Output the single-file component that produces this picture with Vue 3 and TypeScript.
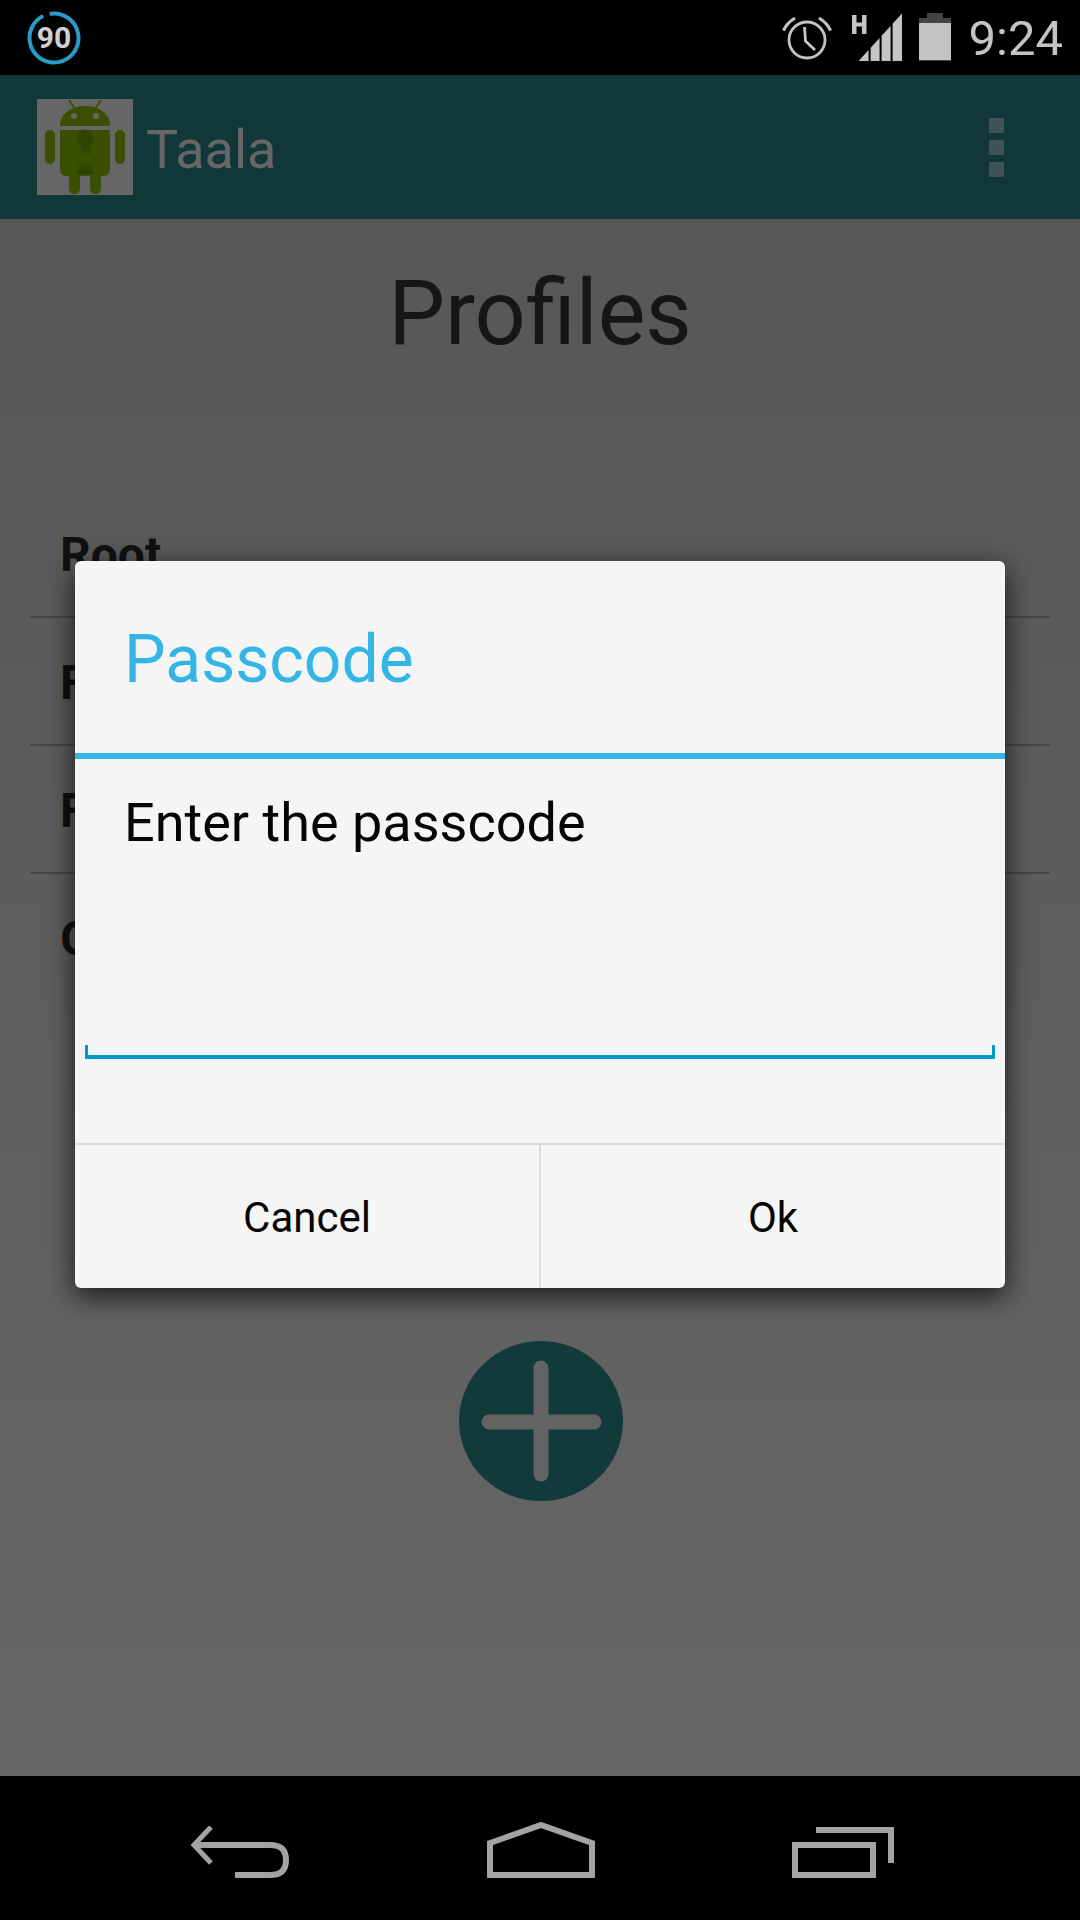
<template>
  <div class="phone">
    <!-- Status bar -->
    <header class="status-bar">
      <svg class="badge" width="54" height="54" viewBox="0 0 54 54">
        <circle cx="27" cy="27" r="24.500" fill="none" stroke="#2a9ccb" stroke-width="4" stroke-dasharray="146 8" transform="rotate(-100 27 27)" />
        <text x="27" y="37" text-anchor="middle" class="badge-text">90</text>
      </svg>
      <div class="status-right">
        <svg class="alarm" width="50" height="50" viewBox="0 0 50 50" fill="none" stroke="#c4c4c4">
          <circle cx="25" cy="27" r="18" stroke-width="2.800" />
          <path d="M22.500 14L23.500 28L33 37" stroke-width="2.800" />
          <path d="M1.500 17.500C4 12 8 8 13 5M48.500 17.500C46 12 42 8 37 5" stroke-width="3.200" />
        </svg>
        <svg class="signal" width="50" height="50" viewBox="0 0 50 50">
          <path d="M0 2H4.500V9.500H10V2H14.500V21H10V13.500H4.500V21H0Z" fill="#c4c4c4" />
          <path d="M7 48V47.500L16.600 37V48ZM18.600 48V34.800L27.600 25V48ZM29.600 48V22.800L38.600 13V48ZM40.600 48V10.800L50 0.500V48Z" fill="#c4c4c4" />
        </svg>
        <svg class="battery" width="32" height="48" viewBox="0 0 32 48">
          <path d="M8 0H24V5H32V48H0V5H8Z" fill="#444" />
          <rect x="0" y="10" width="32" height="37" fill="#c4c4c4" />
        </svg>
        <span class="clock">9:24</span>
      </div>
    </header>

    <!-- Action bar -->
    <div class="app-bar">
      <svg class="app-icon" width="96" height="96" viewBox="0 0 96 96">
        <defs>
          <linearGradient id="keyhole" x1="0" y1="0" x2="0" y2="1">
            <stop offset="0" stop-color="#2a3c00" />
            <stop offset="0.500" stop-color="#3c5400" />
            <stop offset="1" stop-color="#2a3c00" />
          </linearGradient>
        </defs>
        <rect width="96" height="96" fill="#666" />
        <path d="M32 1L38 10M64 1L58 10" stroke="#3a5000" stroke-width="2" />
        <path d="M23 27C23 14 35 7 48 7C61 7 73 14 73 27Z" fill="#3a5000" />
        <circle cx="37" cy="17" r="3" fill="#666" />
        <circle cx="59" cy="17" r="3" fill="#666" />
        <path d="M23 31H73V70Q73 77 66 77H30Q23 77 23 70Z" fill="#3a5000" />
        <rect x="8" y="31" width="10" height="34" rx="5" fill="#3a5000" />
        <rect x="78" y="31" width="10" height="34" rx="5" fill="#3a5000" />
        <rect x="32" y="70" width="11" height="25" rx="5.500" fill="#3a5000" />
        <rect x="53" y="70" width="11" height="25" rx="5.500" fill="#3a5000" />
        <path d="M45 44H52L56 75H40Z" fill="url(#keyhole)" />
        <circle cx="48" cy="39" r="8.500" fill="#304400" />
      </svg>
      <span class="app-title">Taala</span>
      <div class="overflow-menu">
        <i /><i /><i />
      </div>
    </div>

    <!-- Screen behind the dialog -->
    <main class="content">
      <h1 class="page-title">Profiles</h1>
      <ul class="profile-list">
        <li v-for="p in profiles" :key="p">{{ p }}</li>
      </ul>
      <div class="add-btn">
        <svg width="164" height="160" viewBox="0 0 164 160">
          <ellipse cx="82" cy="80" rx="82" ry="80" fill="#123a3b" />
          <path d="M30 81H135M82 27V133" stroke="#636363" stroke-width="15" stroke-linecap="round" />
        </svg>
      </div>
    </main>

    <!-- Navigation bar -->
    <nav class="nav-bar">
      <svg width="100" height="52" viewBox="0 0 100 52" fill="none" stroke="#a3a3a3" stroke-width="6">
        <path d="M21 1L4 19L21 37" stroke-width="5" />
        <path d="M4 19H80C92 19 96 25 96 34C96 43 92 49 80 49H45" />
      </svg>
      <svg width="108" height="56" viewBox="0 0 108 56" fill="none" stroke="#a3a3a3" stroke-width="6">
        <path d="M3 53V21L54 3L105 21V53Z" />
      </svg>
      <svg width="102" height="52" viewBox="0 0 102 52" fill="none" stroke="#a3a3a3" stroke-width="6">
        <path d="M24 4H99V37" />
        <path d="M3 49V19H81V49Z" />
      </svg>
    </nav>

    <!-- Passcode dialog -->
    <section class="dialog">
      <div class="dialog-title">Passcode</div>
      <div class="dialog-body">
        <p class="dialog-msg">Enter the passcode</p>
        <div class="edit-field" />
      </div>
      <div class="dialog-buttons">
        <button>Cancel</button>
        <button>Ok</button>
      </div>
    </section>
  </div>
</template>

<script setup lang="ts">
const profiles: string[] = ['Root', 'Family', 'Friends', 'Guest']
</script>

<style>
html, body { margin: 0; background: #000; }
</style>

<style scoped>
.phone {
  position: relative;
  width: 1080px;
  height: 1920px;
  display: flex;
  flex-direction: column;
  overflow: hidden;
  font-family: Roboto, "Liberation Sans", sans-serif;
  background: #000;
}

/* Status bar */
.status-bar {
  height: 75px;
  flex: none;
  display: flex;
  align-items: center;
  justify-content: space-between;
  padding: 0 17px 0 27px;
  background: #000;
}
.badge { display: block; margin-top: 1px; }
.badge-text { font-size: 30px; font-weight: 700; fill: #d0d0d0; }
.status-right { display: flex; align-items: center; }
.alarm { margin-right: 20px; }
.signal { margin-right: 17px; }
.battery { margin-right: 18px; margin-bottom: 2px; }
.clock { font-size: 49px; color: #c4c4c4; line-height: 75px; padding-top: 1px; }

/* Action bar */
.app-bar {
  height: 144px;
  flex: none;
  display: flex;
  align-items: center;
  box-sizing: border-box;
  padding: 0 76px 0 37px;
  background: #113739;
}
.app-icon { flex: none; }
.app-title { margin: 5px 0 0 13px; font-size: 54px; color: #666; flex: 1; }
.overflow-menu { display: flex; flex-direction: column; gap: 7px; }
.overflow-menu i { display: block; width: 15px; height: 15px; background: #3f5354; }

/* Content */
.content {
  flex: 1;
  min-height: 0;
  background: linear-gradient(#575757, #666);
  display: flex;
  flex-direction: column;
}
.page-title {
  margin: 42px 0 0;
  text-align: center;
  font-size: 90px;
  font-weight: 400;
  line-height: 106px;
  color: #161616;
}
.profile-list {
  list-style: none;
  margin: 123px 30px 0;
  padding: 0;
}
.profile-list li {
  box-sizing: border-box;
  height: 128px;
  line-height: 130px;
  padding-left: 30px;
  font-size: 48px;
  font-weight: 700;
  color: #111;
  border-bottom: 2px solid #464646;
}
.profile-list li:last-child { border-bottom: 0; }
.add-btn {
  display: flex;
  justify-content: center;
  margin-top: 339px;
  padding-left: 2px;
}

/* Nav bar */
.nav-bar {
  height: 144px;
  flex: none;
  box-sizing: border-box;
  background: #000;
  display: flex;
  align-items: flex-end;
  padding: 0 186px 42px 190px;
  justify-content: space-between;
}

/* Dialog */
.dialog {
  position: absolute;
  left: 75px;
  top: 561px;
  width: 930px;
  height: 727px;
  display: flex;
  flex-direction: column;
  background: #f5f5f5;
  border-radius: 6px;
  box-shadow: 0 8px 28px rgba(0, 0, 0, .75);
}
.dialog-title {
  height: 198px;
  flex: none;
  box-sizing: border-box;
  padding: 0 49px;
  line-height: 198px;
  font-size: 66px;
  color: #33b5e5;
  border-bottom: 6px solid #33b5e5;
}
.dialog-body {
  flex: 1;
  display: flex;
  flex-direction: column;
  padding: 32px 10px 0;
}
.dialog-msg {
  margin: 0;
  padding: 0 39px;
  font-size: 54px;
  line-height: 64px;
  color: #050505;
}
.edit-field {
  margin-top: 190px;
  height: 10px;
  border: 4px solid #0099cc;
  border-top: 0;
  border-left-width: 3px;
  border-right-width: 3px;
}
.dialog-buttons {
  height: 145px;
  flex: none;
  box-sizing: border-box;
  display: flex;
  border-top: 2px solid #d8d8d8;
}
.dialog-buttons button {
  flex: 1;
  border: 0;
  padding: 2px 0 0;
  background: none;
  font-family: inherit;
  font-size: 42px;
  color: #050505;
}
.dialog-buttons button + button { border-left: 2px solid #dcdcdc; }
</style>
